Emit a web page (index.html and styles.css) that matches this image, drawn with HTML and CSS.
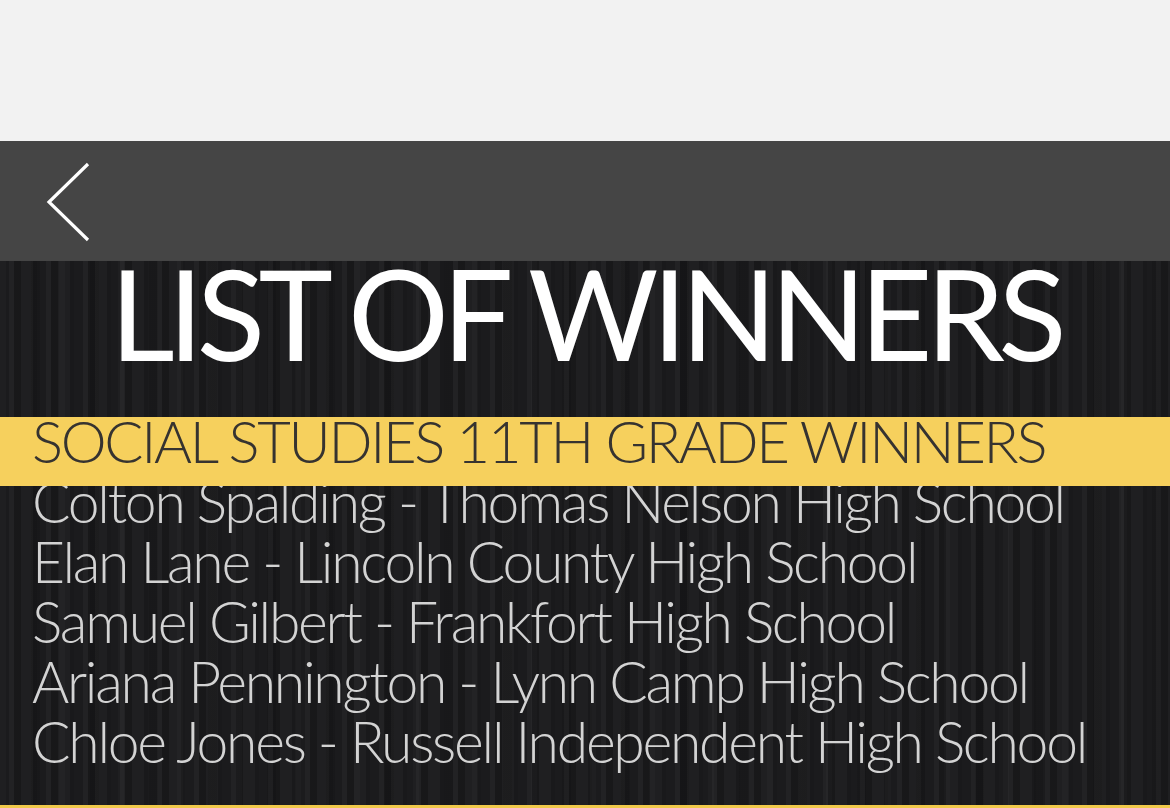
FILE: index.html
```html
<!DOCTYPE html>
<html>
<head lang="en">
<meta charset="UTF-8">
<title>List of Winners</title>
<link rel="stylesheet" href="styles.css">
</head>
<body>
  <div class="status"></div>

  <div class="navbar">
    <a class="back" href="#">
      <svg width="48" height="84" viewBox="0 0 48 84">
        <polyline points="44,5 5,43 44,81" fill="none" stroke="#fff" stroke-width="3.2"/>
      </svg>
    </a>
  </div>

  <div class="board">
    <h1 class="title">LIST OF WINNERS</h1>

    <div class="banner">SOCIAL STUDIES 11TH GRADE WINNERS</div>

    <ul class="winners">
      <li>Colton Spalding - Thomas Nelson High School</li>
      <li>Elan Lane - Lincoln County High School</li>
      <li>Samuel Gilbert - Frankfort High School</li>
      <li>Ariana Pennington - Lynn Camp High School</li>
      <li>Chloe Jones - Russell Independent High School</li>
    </ul>
  </div>
</body>
</html>
```

FILE: styles.css
```css
html, body {
margin: 0;
padding: 0;
height: 100%;
}
body {
font-family: Lato, "Open Sans", sans-serif;
background: #1c1c1e;
overflow: hidden;
}
.status {
height: 141px;
background: #f2f2f2;
}
.navbar {
height: 120px;
background: #454545;
display: flex;
align-items: flex-start;
padding-left: 44px;
box-sizing: border-box;
padding-top: 18px;
}
.back { display: block; line-height: 0; }

/* dark pinstripe backdrop */
.board {
height: 544px;
border-bottom: 3px solid #f0c94a;
background-color: #1b1b1d;
background-image:
  repeating-linear-gradient(90deg,
    rgba(255,255,255,0.00) 0px, rgba(255,255,255,0.00) 9px,
    rgba(255,255,255,0.03) 9px, rgba(255,255,255,0.03) 14px,
    rgba(0,0,0,0.12) 14px, rgba(0,0,0,0.12) 21px,
    rgba(255,255,255,0.02) 21px, rgba(255,255,255,0.02) 33px,
    rgba(0,0,0,0.08) 33px, rgba(0,0,0,0.08) 37px),
  repeating-linear-gradient(90deg,
    rgba(255,255,255,0.02) 0px, rgba(255,255,255,0.02) 6px,
    rgba(0,0,0,0.00) 6px, rgba(0,0,0,0.00) 31px,
    rgba(0,0,0,0.10) 31px, rgba(0,0,0,0.10) 40px,
    rgba(0,0,0,0.00) 40px, rgba(0,0,0,0.00) 59px);
}
.title {
margin: 0;
text-align: center;
color: #fff;
font-weight: 400;
font-size: 126px;
letter-spacing: -6.6px;
line-height: 104px;
}
.banner {
position: relative;
z-index: 1;
margin-top: 52px;
height: 69px;
background: #f6d05d;
color: #363330;
font-weight: 300;
font-size: 58px;
letter-spacing: -2.3px;
line-height: 48px;
padding-left: 32px;
white-space: nowrap;
}
.winners {
list-style: none;
margin: -15px 0 0;
padding: 0 0 0 32px;
color: #d3d3d3;
font-weight: 300;
font-size: 57px;
letter-spacing: -2.25px;
line-height: 60px;
white-space: nowrap;
}
```
